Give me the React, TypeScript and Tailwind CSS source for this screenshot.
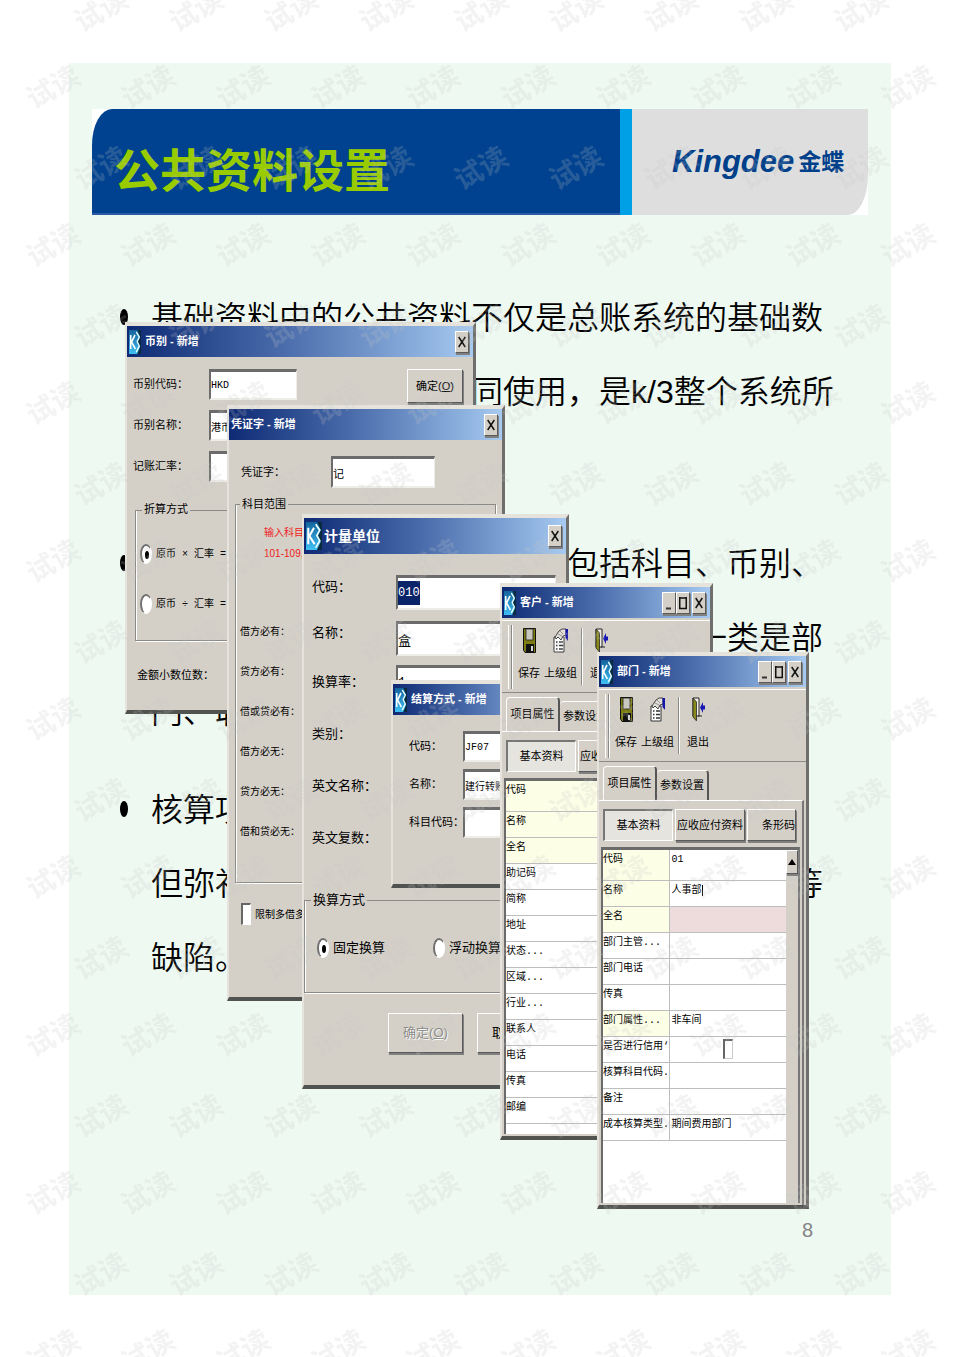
import React from 'react';
import clsx from 'clsx';

const listLines = [
  [
    [{ text: '基础资料中的公共资料不仅是总账系统的基础数' }],
    [{ gap: 'w-80' }, { text: '同使用，是k/3整个系统所' }],
    [],
  ],
  [
    [{ gap: 'w-[416px]' }, { text: '包括科目、币别、' }],
    [{ gap: 'w-[544px]' }, { text: '一类是部' }],
    [{ text: '门、职' }],
  ],
  [
    [{ text: '核算项' }],
    [{ text: '但弥补' }, { gap: 'w-[544px]' }, { text: '等' }],
    [{ text: '缺陷。' }],
  ],
] as { text?: string; gap?: string }[][][];

const customerRows = [
  { label: '代码', tinted: true },
  { label: '名称', tinted: true },
  { label: '全名', tinted: true },
  { label: '助记码' },
  { label: '简称' },
  { label: '地址' },
  { label: '状态...' },
  { label: '区域...' },
  { label: '行业...' },
  { label: '联系人' },
  { label: '电话' },
  { label: '传真' },
  { label: '邮编' },
];

const departmentRows = [
  { label: '代码', value: '01', tinted: true },
  { label: '名称', value: '人事部', tinted: true, caret: true },
  { label: '全名', tinted: true, required: true },
  { label: '部门主管...' },
  { label: '部门电话' },
  { label: '传真' },
  { label: '部门属性...', value: '非车间', tinted: true },
  { label: '是否进行信用‘', checkbox: true },
  { label: '核算科目代码.' },
  { label: '备注' },
  { label: '成本核算类型.', value: '期间费用部门' },
];

type Row = {
  label: string;
  value?: string;
  tinted?: boolean;
  caret?: boolean;
  required?: boolean;
  checkbox?: boolean;
};

const mono = "font-['Liberation_Mono','Noto_Sans_CJK_SC',monospace]";
const raised =
  'border border-t-white border-l-white border-r-[#5a5a5a] border-b-[#5a5a5a] bg-[#d4d0c8] shadow-[1px_2px_0_#808080]';
const sunken =
  'border-t-[3px] border-l-2 border-r border-b-2 border-t-[#6b6b6b] border-l-[#6b6b6b] border-r-[#efede8] border-b-[#efede8] bg-white';

function K3Icon({ className }: { className?: string }) {
  return (
    <svg viewBox="0 0 14 24" preserveAspectRatio="none" className={clsx('shrink-0', className)} aria-hidden="true">
      <defs>
        <linearGradient id="k3" x1="0" y1="0" x2="0" y2="1">
          <stop offset="0" stopColor="#14639c" />
          <stop offset="1" stopColor="#3fc0f4" />
        </linearGradient>
      </defs>
      <rect width="14" height="24" fill="url(#k3)" />
      <path d="M10 0h4v24h-4.500l3.500-7-2.500-5 2.500-5z" fill="#0b2b3c" />
      <path d="M2 5v14M7 5L3 12l4.500 7" fill="none" stroke="#fff" strokeWidth="1.800" />
      <path d="M8.500 2L12 7l-2.500 4.500L12 16l-3.500 6" fill="none" stroke="#eaffff" strokeWidth="1.500" />
    </svg>
  );
}

function SaveIcon() {
  return (
    <svg viewBox="0 0 13 25" preserveAspectRatio="none" className="h-[25px] w-[13px]" aria-hidden="true">
      <path d="M.5.5h12v24H2L.5 22z" fill="#7c7c12" stroke="#111" />
      <path d="M3 1h7v11H3z" fill="#c9c9c0" stroke="#222" strokeWidth=".8" />
      <path d="M3 16h8v8H3z" fill="#111" />
      <path d="M8 18h2v5H8z" fill="#d9d9d9" />
    </svg>
  );
}

function ParentIcon() {
  return (
    <svg viewBox="0 0 15 25" preserveAspectRatio="none" className="h-[25px] w-[15px]" aria-hidden="true">
      <path d="M1 9h10v15H1z" fill="#fff" stroke="#333" />
      <path d="M3 14h1.500M6 14h4M3 17.500h1.500M6 17.500h4M3 21h1.500M6 21h4" stroke="#333" strokeWidth="1.300" />
      <path d="M2 9l4-6 3-2h4v6l-3 1-2 4-3-3-2 2z" fill="#e2dfd8" stroke="#333" strokeWidth=".9" />
      <path d="M5 6l4 2M7 3l3 3" stroke="#777" strokeWidth=".7" />
      <path d="M12.500 1H15v12l-2.500-3z" fill="#1515a8" />
    </svg>
  );
}

function ExitIcon() {
  return (
    <svg viewBox="0 0 13 25" preserveAspectRatio="none" className="h-[25px] w-[13px]" aria-hidden="true">
      <path d="M1 1h6v18H1z" fill="#f2f0ea" stroke="#222" />
      <path d="M1 1l3.500 4v19L1 20z" fill="#8a8a1c" stroke="#222" strokeWidth=".8" />
      <path d="M6 19h4" stroke="#222" />
      <path d="M8 10.500l3-5.500v3.500h2v4h-2V16z" fill="#1616b4" />
    </svg>
  );
}

function CaptionButton({ kind }: { kind: 'min' | 'max' | 'close' }) {
  return (
    <button
      type="button"
      aria-label={kind}
      className={clsx('flex h-[22px] w-3.5 shrink-0 items-center justify-center', kind === 'close' && 'ml-0.5', raised)}
    >
      <svg viewBox="0 0 8 14" preserveAspectRatio="none" className="h-3.5 w-2" aria-hidden="true">
        {kind === 'min' && <path d="M1 12.500h5" stroke="#333" strokeWidth="2" />}
        {kind === 'max' && <path d="M.7 1v11.500h6.600V1M0 2h8" fill="none" stroke="#111" strokeWidth="1.600" />}
        {kind === 'close' && <path d="M.7 2l6.600 10M7.300 2L.7 12" stroke="#111" strokeWidth="1.500" />}
      </svg>
    </button>
  );
}

function Window({
  title,
  className,
  barClass = 'h-[31px] text-[11px]',
  iconClass = 'mr-1 h-6 w-3',
  icon = true,
  resizable,
  children,
}: {
  title: string;
  className: string;
  barClass?: string;
  iconClass?: string;
  icon?: boolean;
  resizable?: boolean;
  children: React.ReactNode;
}) {
  return (
    <section
      className={clsx(
        'absolute flex flex-col overflow-hidden whitespace-nowrap border-t-4 border-l-2 border-r-[3px] border-b-4 border-t-[#e6e3dd] border-l-[#e6e3dd] border-r-[#6e6e6c] border-b-[#50534f] bg-[#d4d0c8] text-[11px] text-black',
        className,
      )}
    >
      <header
        className={clsx(
          'flex shrink-0 items-center bg-linear-to-r from-[#0f2a74] via-[#4a6cab] via-45% to-[#a6caf0] pr-1 pl-0.5 font-bold text-white',
          barClass,
        )}
      >
        {icon && <K3Icon className={iconClass} />}
        <h2 className="flex-1">{title}</h2>
        {resizable && <CaptionButton kind="min" />}
        {resizable && <CaptionButton kind="max" />}
        <CaptionButton kind="close" />
      </header>
      {children}
    </section>
  );
}

function Field({
  label,
  value = '',
  labelClass,
  inputClass,
  className,
}: {
  label: string;
  value?: string;
  labelClass: string;
  inputClass: string;
  className?: string;
}) {
  return (
    <label className={clsx('flex items-center', className)}>
      <span className={clsx('shrink-0', labelClass)}>{label}：</span>
      <input type="text" defaultValue={value} className={clsx('min-w-0 outline-none', mono, sunken, inputClass)} />
    </label>
  );
}

function Radio({ name, label, checked }: { name: string; label: string; checked?: boolean }) {
  return (
    <label className="flex items-center gap-1">
      <input
        type="radio"
        name={name}
        defaultChecked={checked}
        className="flex h-5 w-3 shrink-0 appearance-none items-center justify-center rounded-[50%] border-t-2 border-l-2 border-r border-b border-t-[#707070] border-l-[#707070] border-r-white border-b-white bg-white before:h-2 before:w-1 before:rounded-[50%] checked:before:bg-black"
      />
      {label}
    </label>
  );
}

const etched = 'min-w-0 border border-[#8a8a86] shadow-[1px_1px_0_#fff,inset_1px_0_0_#fff]';

function ToolButton({ icon, label }: { icon: React.ReactNode; label: string }) {
  return (
    <button type="button" className="flex flex-col items-center gap-2">
      {icon}
      <span className="leading-6">{label}</span>
    </button>
  );
}

function RecordWindow({
  title,
  className,
  rows,
  labelWidth,
}: {
  title: string;
  className: string;
  rows: Row[];
  labelWidth: string;
}) {
  return (
    <Window title={title} className={className} resizable>
      <div className="mt-0.5 flex h-[73px] shrink-0 items-center border-t border-b border-t-white border-b-[#8a8a86] pl-1.5">
        <span className="h-16 w-1 border-r border-l border-r-[#8a8a86] border-l-white shadow-[1px_0_0_#fff]" />
        <div className="ml-0.5 flex">
          <div className="flex gap-1 px-1">
            <ToolButton icon={<SaveIcon />} label="保存" />
            <ToolButton icon={<ParentIcon />} label="上级组" />
          </div>
          <span className="mr-2 border-l border-[#8a8a86] shadow-[1px_0_0_#fff]" />
          <ToolButton icon={<ExitIcon />} label="退出" />
        </div>
      </div>
      <div role="tablist" className="mt-1 flex h-[34px] shrink-0 items-end pl-1">
        <button
          role="tab"
          type="button"
          aria-selected="true"
          className="h-full w-[54px] rounded-t-sm border-t border-l border-r-2 border-t-white border-l-white border-r-[#555]"
        >
          项目属性
        </button>
        <button
          role="tab"
          type="button"
          aria-selected="false"
          className="h-[30px] w-[52px] rounded-t-sm border-t border-r-2 border-t-white border-r-[#555]"
        >
          参数设置
        </button>
      </div>
      <div className="mr-0.5 flex flex-1 flex-col border-t border-r-2 border-t-white border-r-[#777] px-0.5 pt-2 pb-0.5">
        <div className="mb-1.5 flex h-8 gap-0.5 pr-1 pl-0.5">
          <button
            type="button"
            className="w-[70px] border-t-2 border-l-2 border-r border-b border-t-[#777] border-l-[#777] border-r-white border-b-white bg-[#e6e4df]"
          >
            基本资料
          </button>
          <button type="button" className={clsx('w-[70px]', raised)}>
            应收应付资料
          </button>
          <button type="button" className={clsx('flex-1 text-right', raised)}>
            条形码
          </button>
        </div>
        <div className="flex flex-1 border-t-[3px] border-r-2 border-l-2 border-t-[#6b6b6b] border-r-[#777] border-l-[#6b6b6b] bg-white">
          <div className="min-w-0 flex-1">
            <table className={clsx('w-full table-fixed border-collapse text-[10px]', mono)}>
              <tbody>
                {rows.map((row, i) => (
                  <tr key={row.label} className={clsx('border-b border-[#bdbdbd]', i === 0 ? 'h-[30px]' : 'h-[26px]')}>
                    <th
                      scope="row"
                      className={clsx(
                        'overflow-hidden border-r border-[#bdbdbd] p-0 text-left align-top leading-5 font-normal',
                        labelWidth,
                        row.tinted && 'bg-[#fdfee6]',
                      )}
                    >
                      {row.label}
                    </th>
                    <td className={clsx('p-0 align-top leading-5', row.required && 'bg-[#eedcdd]')}>
                      {row.value && (
                        <span className={clsx('ml-0.5', row.caret && 'border-r border-black')}>{row.value}</span>
                      )}
                      {row.checkbox && (
                        <input
                          type="checkbox"
                          aria-label={row.label}
                          className="mx-auto mt-0.5 block h-5 w-2.5 appearance-none border-t-2 border-l-2 border-r border-b border-t-[#666] border-l-[#666] border-r-[#ccc] border-b-[#ccc] bg-white"
                        />
                      )}
                    </td>
                  </tr>
                ))}
              </tbody>
            </table>
          </div>
          <div className="w-3 shrink-0 bg-[#d4d0c8]">
            <button
              type="button"
              aria-label="scroll up"
              className={clsx('flex h-6 w-full items-center justify-center', raised)}
            >
              <svg viewBox="0 0 8 8" className="size-2" aria-hidden="true">
                <path d="M4 1l4 6H0z" />
              </svg>
            </button>
          </div>
        </div>
      </div>
    </Window>
  );
}

function CurrencyWindow() {
  return (
    <Window title="币别 - 新增" className="top-[259px] left-14 min-h-[392px] w-[351px]">
      <div className="flex items-start justify-between pt-3 pr-2.5 pl-1.5">
        <div className="flex flex-col gap-2.5">
          <Field label="币别代码" value="HKD" labelClass="w-[76px]" inputClass="h-[31px] w-[88px] text-[10px]" />
          <Field label="币别名称" value="港币" labelClass="w-[76px]" inputClass="h-[31px] w-[88px] text-[10px]" />
          <Field label="记账汇率" labelClass="w-[76px]" inputClass="h-[31px] w-[88px]" />
        </div>
        <button type="button" className={clsx('h-[34px] w-14', raised)}>
          确定(<u>O</u>)
        </button>
      </div>
      <fieldset
        className={clsx('mx-2 mt-[18px] flex flex-col gap-[30px] px-1 pt-6 pb-[26px] text-[10px]', mono, etched)}
      >
        <legend className="ml-0.5 px-0.5 text-[11px] leading-5">折算方式</legend>
        <Radio name="convert" label="原币 × 汇率 =" checked />
        <Radio name="convert" label="原币 ÷ 汇率 =" />
      </fieldset>
      <p className="mt-[22px] pl-2.5 leading-6">金额小数位数：</p>
    </Window>
  );
}

function VoucherWindow() {
  return (
    <Window title="凭证字 - 新增" icon={false} className="top-[342px] left-[158px] min-h-[596px] w-[278px]">
      <Field label="凭证字" value="记" className="mt-4 pl-3" labelClass="w-[90px]" inputClass="h-8 w-[104px]" />
      <fieldset className={clsx('mx-1.5 mt-1 px-1 pt-1.5 pb-[30px] text-[10px]', etched)}>
        <legend className="px-0.5 text-[11px] leading-6">科目范围</legend>
        <p className="mb-12 pl-6 leading-[21px] text-[#f01818]">
          输入科目
          <br />
          101-109,
        </p>
        {['借方必有', '贷方必有', '借或贷必有', '借方必无', '贷方必无', '借和贷必无'].map((label) => (
          <p key={label} className="h-10 leading-10">
            {label}：
          </p>
        ))}
      </fieldset>
      <label className="mt-5 flex items-center gap-1 pl-3 text-[10px]">
        <input
          type="checkbox"
          className="h-[22px] w-2.5 appearance-none border-t-2 border-l-2 border-r border-b border-t-[#666] border-l-[#666] border-r-white border-b-white bg-white"
        />
        限制多借多
      </label>
    </Window>
  );
}

function UnitWindow() {
  return (
    <Window
      title="计量单位"
      barClass="h-9 text-sm"
      iconClass="mr-0.5 h-7 w-4"
      className="top-[451px] left-[233px] min-h-[575px] w-[267px]"
    >
      <div className="flex flex-col pt-2.5 pl-2 text-[13px]">
        <label className="flex h-[46px] items-center">
          <span className="w-[84px]">代码：</span>
          <span className={clsx('flex h-[35px] w-40 items-center self-end', sunken)}>
            <input
              type="text"
              defaultValue="010"
              className={clsx('h-6 w-[22px] bg-[#0a246a] text-xs text-white outline-none', mono)}
            />
          </span>
        </label>
        <Field label="名称" value="盒" className="h-[46px]" labelClass="w-[84px]" inputClass="h-[35px] w-40 self-end" />
        <Field label="换算率" value="1" className="h-[52px]" labelClass="w-[84px]" inputClass="h-[35px] w-40" />
        {['类别', '英文名称', '英文复数'].map((label) => (
          <p key={label} className="h-[52px] leading-[52px]">
            {label}：
          </p>
        ))}
      </div>
      <fieldset className={clsx('mt-6 mr-1 flex gap-12 px-3 pt-[26px] pb-[34px] text-[13px]', etched)}>
        <legend className="-ml-1.5 px-0.5 leading-6">换算方式</legend>
        <Radio name="unit" label="固定换算" checked />
        <Radio name="unit" label="浮动换算" />
      </fieldset>
      <div className="mt-5 flex gap-3.5 pl-[84px] text-[13px]">
        <button
          type="button"
          disabled
          className={clsx('h-10 w-[75px] text-[#8a8a86] [text-shadow:1px_1px_0_#fff]', raised)}
        >
          确定(<u>O</u>)
        </button>
        <button type="button" className={clsx('h-10 w-[75px] pl-3.5 text-left', raised)}>
          取
        </button>
      </div>
    </Window>
  );
}

function SettlementWindow() {
  return (
    <Window title="结算方式 - 新增" className="top-[617px] left-[322px] min-h-[208px] w-[180px]">
      <div className="flex flex-col gap-[7px] pt-4 pl-4">
        <Field label="代码" value="JF07" labelClass="w-[54px]" inputClass="h-[31px] w-24 text-[10px]" />
        <Field label="名称" value="建行转账" labelClass="w-[54px]" inputClass="h-[31px] w-24 text-[10px]" />
        <Field label="科目代码" labelClass="w-[54px]" inputClass="h-[31px] w-24" />
      </div>
    </Window>
  );
}

// Two staggered columns of the same stamp; the odd rows hold one stamp less.
function Watermark() {
  return (
    <svg
      className="pointer-events-none absolute inset-0 size-full"
      fill="#c4c4c4"
      fillOpacity=".2"
      fontSize="28"
      fontWeight="700"
      textAnchor="middle"
      aria-hidden="true"
    >
      <defs>
        <pattern id="mark-odd" x="54" y="-29" width="95" height="158" patternUnits="userSpaceOnUse">
          <text transform="translate(47 39) rotate(-30)" y="10">试读</text>
        </pattern>
        <pattern id="mark-even" x="6" y="47" width="95" height="158" patternUnits="userSpaceOnUse">
          <text transform="translate(47 40) rotate(-30)" y="10">试读</text>
        </pattern>
      </defs>
      <rect x="54" width="855" height="100%" fill="url(#mark-odd)" fillOpacity="1" />
      <rect x="6" width="950" height="100%" fill="url(#mark-even)" fillOpacity="1" />
    </svg>
  );
}

export default function App() {
  return (
    <div className="relative overflow-hidden bg-white pt-[63px] pb-[62px] font-['Liberation_Sans','Noto_Sans_CJK_SC',sans-serif]">
      <main className="relative mx-auto w-full max-w-[822px] bg-[#eef9f1] pt-[46px] pb-[49px]">
        {/* Banner */}
        <header className="mx-[23px] flex h-[106px] bg-white">
          <div className="flex flex-1 items-center rounded-tl-[20px_36px] border-b-2 border-[#2c5ba5] bg-[#00428f] pt-5 pl-[22px]">
            <h1 className="text-[46px] leading-none font-bold whitespace-nowrap text-[#99cc00]">公共资料设置</h1>
          </div>
          <div className="w-3 bg-[#00a0e6]" />
          <div className="flex w-[236px] items-center rounded-br-[20px_40px] bg-[#dedede] pl-10 text-[#003f8a]">
            <span className="text-[31px] font-bold italic">Kingdee</span>
            <span className="ml-1 text-[23px] font-bold">金蝶</span>
          </div>
        </header>

        <ul className="mt-[66px] flex flex-col gap-6 pl-[51px]">
          {listLines.map((lines, i) => (
            <li key={i} className="flex">
              <span className="mt-7 mr-[23px] h-4 w-2 shrink-0 rounded-[50%] bg-black" />
              <div>
                {lines.map((parts, j) => (
                  <p key={j} className="flex h-[74px] text-[32px] leading-[74px] font-[350] whitespace-nowrap">
                    {parts.map((part, k) =>
                      part.gap ? (
                        <span key={k} className={clsx('shrink-0', part.gap)} />
                      ) : (
                        <span key={k}>{part.text}</span>
                      ),
                    )}
                  </p>
                ))}
              </div>
            </li>
          ))}
        </ul>

        <p className="mt-[219px] pr-[78px] text-right text-xl leading-8 text-[#858585]">8</p>

        {/* Cascaded dialogs */}
        <CurrencyWindow />
        <VoucherWindow />
        <UnitWindow />
        <SettlementWindow />
        <RecordWindow
          title="客户 - 新增"
          className="top-[520px] left-[431px] min-h-[557px] w-[213px]"
          rows={customerRows}
          labelWidth="w-[94px]"
        />
        <RecordWindow
          title="部门 - 新增"
          className="top-[589px] left-[528px] min-h-[557px] w-[212px]"
          rows={departmentRows}
          labelWidth="w-[66px]"
        />
      </main>
      <Watermark />
    </div>
  );
}
